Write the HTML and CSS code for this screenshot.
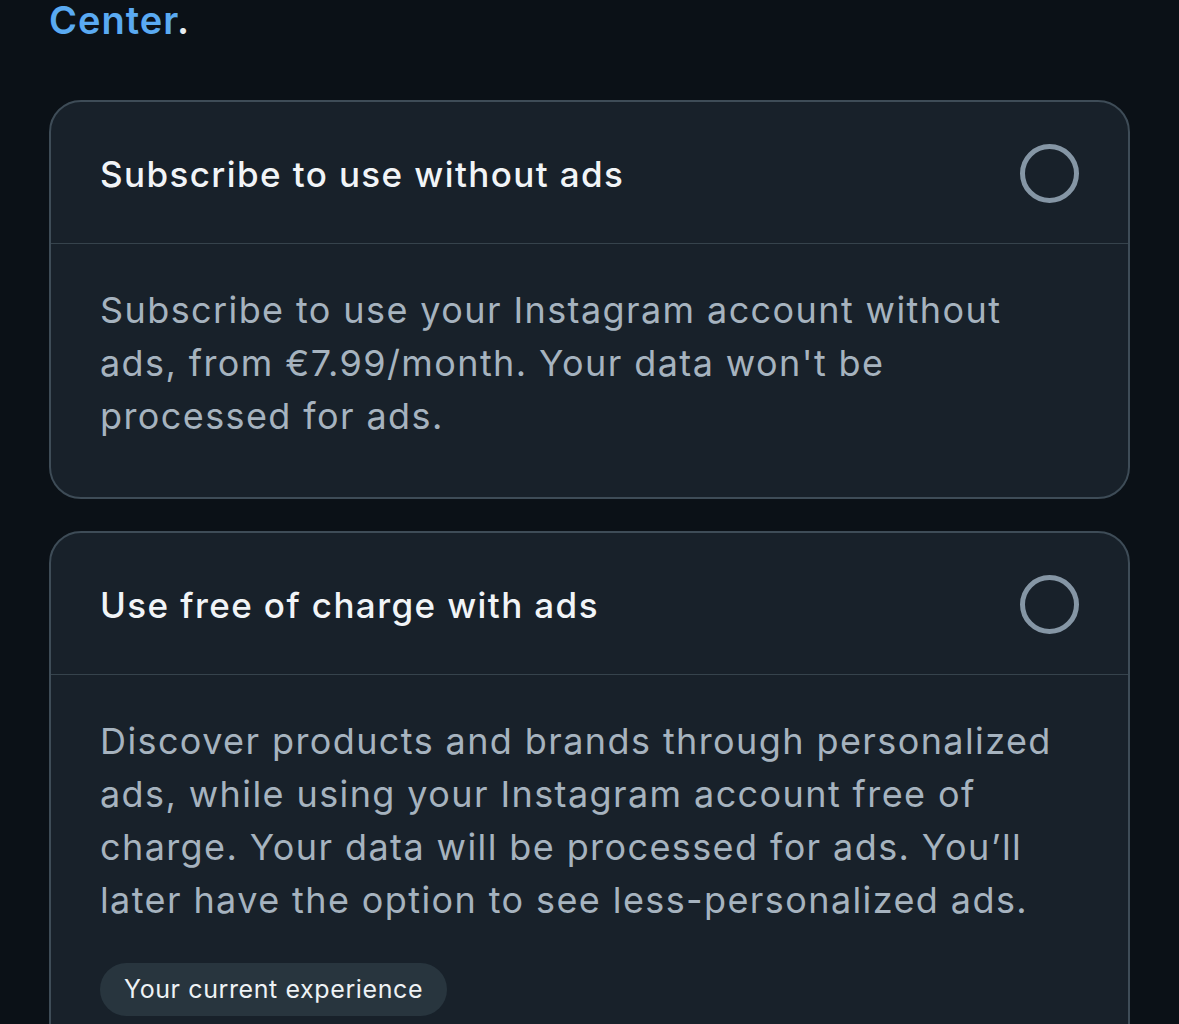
FILE: index.html
```html
<!DOCTYPE html>
<html>
<head>
<meta charset="utf-8">
<link rel="stylesheet" href="styles.css">
</head>
<body>
<div class="page">
  <p class="intro"><span class="link">Center</span>.</p>
  <div class="card">
    <div class="card-head">
      <span class="card-title">Subscribe to use without ads</span>
      <span class="radio"></span>
    </div>
    <div class="card-body">
      <p class="desc">Subscribe to use your Instagram account without ads, from €7.99/month. Your data won't be processed for ads.</p>
    </div>
  </div>
  <div class="card">
    <div class="card-head">
      <span class="card-title">Use free of charge with ads</span>
      <span class="radio"></span>
    </div>
    <div class="card-body">
      <p class="desc">Discover products and brands through personalized ads, while using your Instagram account free of charge. Your data will be processed for ads. You’ll later have the option to see less-personalized ads.</p>
      <span class="badge">Your current experience</span>
    </div>
  </div>
</div>
</body>
</html>
```

FILE: styles.css
```css
html, body {
  margin: 0;
  padding: 0;
  background: #0b1117;
  overflow: hidden;
}
body {
  font-family: Inter, "Noto Sans", sans-serif;
  color: #e6ecf1;
}
.page {
  padding: 0 49px;
  display: flex;
  flex-direction: column;
  gap: 32px;
  margin-top: -5px;
}
.intro {
  margin: 0 0 23px 0;
  font-size: 38px;
  font-weight: 600;
  line-height: 50px;
  letter-spacing: 1px;
  color: #e6ecf1;
}
.link {
  color: #5aaaf2;
}
.card {
  background: #18212a;
  border: 2px solid #3e4c57;
  border-radius: 32px;
  overflow: hidden;
}
.card-head {
  height: 142px;
  display: flex;
  align-items: center;
  justify-content: space-between;
  padding: 2px 49px 0 49px;
  box-sizing: border-box;
  border-bottom: 1px solid #36434c;
}
.card-title {
  font-size: 35px;
  font-weight: 500;
  letter-spacing: 1.4px;
  color: #f1f4f7;
}
.radio {
  width: 59px;
  height: 59px;
  border: 5.5px solid #8596a5;
  border-radius: 50%;
  box-sizing: border-box;
  flex: none;
}
.card-body {
  padding: 40px 49px 54px 49px;
}
.desc {
  margin: 0;
  font-size: 36px;
  line-height: 53px;
  letter-spacing: 1.4px;
  color: #a6b3bf;
}
.badge {
  display: inline-block;
  margin-top: 36px;
  height: 53px;
  line-height: 53px;
  padding: 0 24px;
  border-radius: 27px;
  background: #28353e;
  color: #eef2f5;
  font-size: 25px;
  letter-spacing: 0.6px;
}
```
